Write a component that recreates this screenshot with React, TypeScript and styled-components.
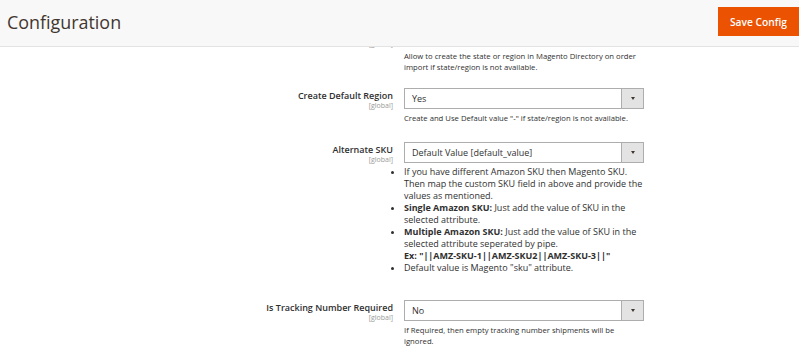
import React from "react";
import styled, { createGlobalStyle } from "styled-components";

const GlobalStyle = createGlobalStyle`
  html, body { margin: 0; padding: 0; background: #ffffff; }
  body {
    font-family: "Open Sans", "Liberation Sans", sans-serif;
    color: #303030;
  }
  * { box-sizing: border-box; }
`;

const Header = styled.header`
  position: fixed;
  top: 0;
  left: 0;
  right: 0;
  height: 47px;
  background: #f8f8f8;
  border-bottom: 1px solid #e3e3e3;
  display: flex;
  align-items: flex-start;
  justify-content: space-between;
  z-index: 10;
`;

const Title = styled.h1`
  margin: 0;
  padding: 10px 0 0 7px;
  font-size: 17.9px;
  line-height: 24px;
  font-weight: 400;
  color: #41362f;
`;

const SaveButton = styled.button`
  margin-top: 7px;
  height: 29px;
  padding: 0 11px;
  background: #eb5202;
  border: 1px solid #eb5202;
  color: #ffffff;
  font-family: "Open Sans", "Liberation Sans", sans-serif;
  font-size: 10.24px;
  font-weight: 600;
  cursor: pointer;
`;

const Form = styled.main`
  display: flex;
  flex-direction: column;
  padding-top: 26px;
`;

const Row = styled.section<{ $top: number }>`
  display: grid;
  grid-template-columns: 393px 240px;
  column-gap: 11px;
  margin-top: ${(p) => p.$top}px;
`;

const LabelCell = styled.div`
  text-align: right;
  padding-top: 2.5px;
`;

const Label = styled.div`
  font-size: 9px;
  line-height: 10px;
  font-weight: 600;
  color: #303030;
`;

const Scope = styled.div`
  font-size: 7px;
  line-height: 9px;
  color: #999999;
`;

const Control = styled.div`
  display: flex;
  flex-direction: column;
`;

const SelectBox = styled.div`
  display: flex;
  height: 21px;
  border: 1px solid #adadad;
  background: #ffffff;
`;

const SelectValue = styled.span`
  flex: 1;
  padding-left: 7px;
  font-size: 9px;
  line-height: 19px;
  color: #303030;
`;

const SelectArrow = styled.span`
  width: 22px;
  background: #e3e3e3;
  border-left: 1px solid #adadad;
  display: flex;
  align-items: center;
  justify-content: center;
  &::after {
    content: "";
    border-left: 2.5px solid transparent;
    border-right: 2.5px solid transparent;
    border-top: 3px solid #41362f;
  }
`;

const Note = styled.p`
  margin: 4px 0 0;
  font-size: 7.7px;
  line-height: 11px;
  color: #303030;
`;

const List = styled.ul`
  margin: 3px 0 0;
  padding: 0;
  list-style: disc outside;
  font-size: 9px;
  line-height: 12px;
  color: #303030;
`;

const Item = styled.li`
  margin: 0;
`;

const Strong = styled.strong`
  font-weight: 700;
`;

function Select({ value }: { value: string }) {
  return (
    <SelectBox>
      <SelectValue>{value}</SelectValue>
      <SelectArrow />
    </SelectBox>
  );
}

function FieldLabel({ text }: { text: string }) {
  return (
    <LabelCell>
      <Label>{text}</Label>
      <Scope>[global]</Scope>
    </LabelCell>
  );
}

export default function App() {
  return (
    <>
      <GlobalStyle />
      <Header>
        <Title>Configuration</Title>
        <SaveButton>Save Config</SaveButton>
      </Header>
      <Form>
        <Row $top={0}>
          <FieldLabel text="Create Region If Not Exist" />
          <Control>
            <Select value="Yes" />
            <Note>
              Allow to create the state or region in Magento Directory on order
              import if state/region is not available.
            </Note>
          </Control>
        </Row>
        <Row $top={15}>
          <FieldLabel text="Create Default Region" />
          <Control>
            <Select value="Yes" />
            <Note>
              Create and Use Default value "-" if state/region is not available.
            </Note>
          </Control>
        </Row>
        <Row $top={18}>
          <FieldLabel text="Alternate SKU" />
          <Control>
            <Select value="Default Value [default_value]" />
            <List>
              <Item>
                If you have different Amazon SKU then Magento SKU. Then map the
                custom SKU field in above and provide the values as mentioned.
              </Item>
              <Item>
                <Strong>Single Amazon SKU:</Strong> Just add the value of SKU in
                the selected attribute.
              </Item>
              <Item>
                <Strong>Multiple Amazon SKU:</Strong> Just add the value of SKU
                in the selected attribute seperated by pipe.
                <br />
                <Strong>Ex: "||AMZ-SKU-1||AMZ-SKU2||AMZ-SKU-3||"</Strong>
              </Item>
              <Item>Default value is Magento "sku" attribute.</Item>
            </List>
          </Control>
        </Row>
        <Row $top={26}>
          <FieldLabel text="Is Tracking Number Required" />
          <Control>
            <Select value="No" />
            <Note>
              If Required, then empty tracking number shipments will be ignored.
            </Note>
          </Control>
        </Row>
      </Form>
    </>
  );
}
